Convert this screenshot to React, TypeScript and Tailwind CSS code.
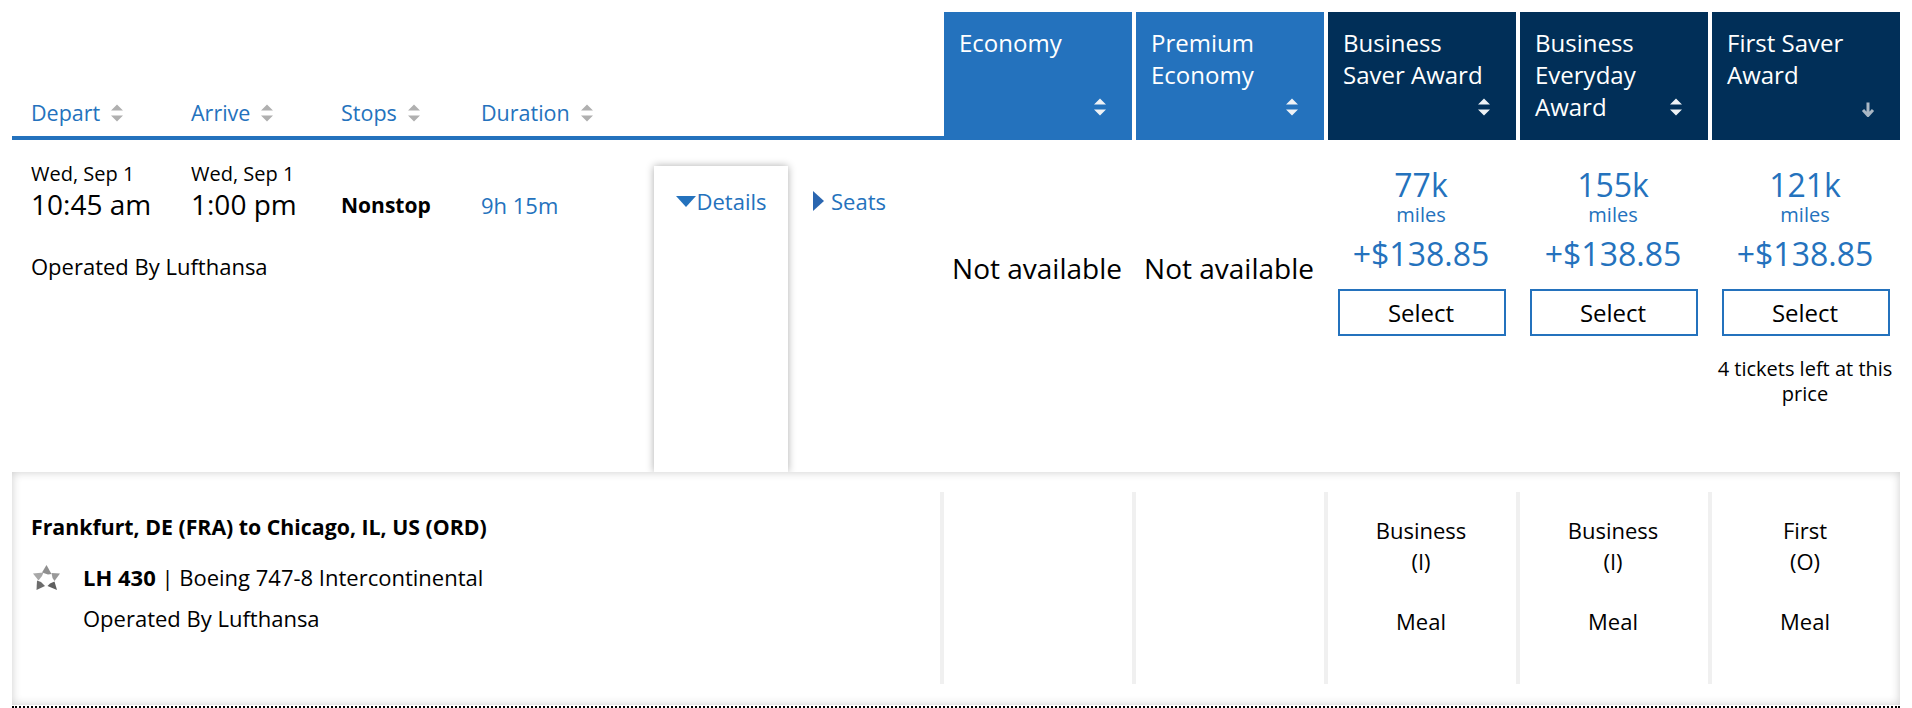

const font = { fontFamily: '"Open Sans", sans-serif' };

function Sort({ color = "#b0b0b0" }: { color?: string }) {
  return (
    <svg width="12" height="18" viewBox="0 0 12 18" className="shrink-0">
      <path d="M6 0.5 L12 6.5 H0 Z M0 11.5 H12 L6 17.5 Z" fill={color} />
    </svg>
  );
}

function HeadSort({ label }: { label: string }) {
  return (
    <div className="flex items-center gap-[11px] text-[21.5px] leading-[28px] text-[#2472bd]">
      <span>{label}</span>
      <Sort />
    </div>
  );
}

function FareHead({ label, navy, arrow }: { label: string; navy?: boolean; arrow?: boolean }) {
  return (
    <div className={`relative w-[188px] h-[128px] pl-[15px] pt-[15px] pr-2 text-[24px] leading-[32px] text-white ${navy ? "bg-[#012f58]" : "bg-[#2472bd]"}`}>
      <div className="whitespace-pre-line">{label}</div>
      <div className={`absolute ${arrow ? "right-[25px] top-[90px]" : "right-[26px] top-[86px]"}`}>
        {arrow ? (
          <svg width="14" height="15" viewBox="0 0 14 15">
            <path d="M7 0.5 V13 M2 8 L7 13.5 L12 8" fill="none" stroke="#aab7c4" strokeWidth="3" />
          </svg>
        ) : (
          <Sort color="#eef2f6" />
        )}
      </div>
    </div>
  );
}

function Price({ miles, note }: { miles: string; note?: boolean }) {
  return (
    <div className="w-[188px] flex flex-col items-center pt-[25px] text-[#2472bd]">
      <div className="pr-[2px] text-[32px] leading-[39px]">{miles}</div>
      <div className="pr-[2px] text-[20px] leading-[22px]">miles</div>
      <div className="pr-[2px] text-[32px] leading-[40px] mt-[8px]">+$138.85</div>
      <div className="mt-[15px] pr-[2px] w-[168px] h-[47px] border-2 border-[#2472bd] flex items-center justify-center text-[24px] text-black">Select</div>
      {note && <div className="mt-[20px] pr-[2px] w-[188px] text-center text-[20px] leading-[25px] text-black">4 tickets left at this price</div>}
    </div>
  );
}

function NA() {
  return (
    <div className="w-[188px] pt-[111px] pr-[2px] text-center text-[28px] leading-[34px] text-black whitespace-nowrap">Not available</div>
  );
}

function Cabin({ a, b }: { a?: string; b?: string }) {
  return (
    <div className="w-[192px] h-[192px] border-l-4 border-[#f0f0f0] pr-[2px] flex flex-col items-center pt-[23px] text-[22px] leading-[31px] text-black">
      {a && (
        <>
          <div>{a}</div>
          <div>{b}</div>
          <div className="mt-[29px]">Meal</div>
        </>
      )}
    </div>
  );
}

function Star() {
  return (
    <svg width="27" height="25" viewBox="0 0 27 25" className="shrink-0 blur-[0.6px]">
      <path d="M13.5 0 L18.5 9 L15 9.5 L9 7.5 Z" fill="#8f8f8f" />
      <path d="M27 8.5 L21.5 16 L19.5 13 L18.5 8 Z" fill="#999999" />
      <path d="M24 25 L14.5 21 L17 18.5 L21.5 16.5 Z" fill="#5f5f5f" />
      <path d="M3.5 25 L4 15.5 L8 17 L12 21 Z" fill="#6c6c6c" />
      <path d="M0 8.5 L10.5 7.5 L9 11 L5.5 15.5 Z" fill="#a8a8a8" />
    </svg>
  );
}

export default function App() {
  return (
    <div style={font} className="w-[1912px] h-[708px] overflow-hidden bg-white text-black">
      <div className="flex pt-[12px] pl-[12px] pr-[12px]">
        <div className="w-[932px] border-b-[4px] border-[#2472bd] flex items-end pl-[19px] pb-[9px]">
          <div className="w-[160px]"><HeadSort label="Depart" /></div>
          <div className="w-[150px]"><HeadSort label="Arrive" /></div>
          <div className="w-[140px]"><HeadSort label="Stops" /></div>
          <div><HeadSort label="Duration" /></div>
        </div>
        <div className="flex gap-[4px]">
          <FareHead label="Economy" />
          <FareHead label={"Premium\nEconomy"} />
          <FareHead label={"Business\nSaver Award"} navy />
          <FareHead label={"Business\nEveryday\nAward"} navy />
          <FareHead label={"First Saver\nAward"} navy arrow />
        </div>
      </div>

      <div className="flex h-[332px] pl-[31px]">
        <div className="w-[913px] flex">
          <div className="w-[623px] pt-[21px]">
            <div className="flex">
              <div className="w-[160px]">
                <div className="text-[20px] leading-[25px]">Wed, Sep 1</div>
                <div className="text-[28px] leading-[36px]">10:45 am</div>
              </div>
              <div className="w-[150px]">
                <div className="text-[20px] leading-[25px]">Wed, Sep 1</div>
                <div className="text-[28px] leading-[36px]">1:00 pm</div>
              </div>
              <div className="w-[140px] pt-[26px] text-[21px] leading-[36px] font-bold">Nonstop</div>
              <div className="pt-[26px] text-[22px] leading-[36px] text-[#2472bd]">9h 15m</div>
            </div>
            <div className="mt-[30px] text-[22px] leading-[26px]">Operated By Lufthansa</div>
          </div>
          <div className="mt-[26px] w-[134px] h-[306px] bg-white shadow-[0_0_8px_rgba(0,0,0,0.32)] flex justify-center pt-[21px]">
            <div className="flex items-center h-[28px] gap-[1px] text-[22px] text-[#2472bd]">
              <svg width="20" height="11" viewBox="0 0 20 11"><path d="M0 0 H20 L10 11 Z" fill="#2472bd" /></svg>
              <span>Details</span>
            </div>
          </div>
          <div className="mt-[47px] ml-[25px] flex items-center h-[28px] gap-[7px] text-[22px] text-[#2472bd]">
            <svg width="11" height="20" viewBox="0 0 11 20"><path d="M0 0 V20 L11 10 Z" fill="#2a66b0" /></svg>
            <span>Seats</span>
          </div>
        </div>
        <NA />
        <div className="w-[4px]" />
        <NA />
        <div className="w-[4px]" />
        <Price miles="77k" />
        <div className="w-[4px]" />
        <Price miles="155k" />
        <div className="w-[4px]" />
        <Price miles="121k" note />
      </div>

      <div className="relative mx-[12px] h-[233px] flex bg-white shadow-[inset_0_0_10px_rgba(0,0,0,0.2)] pt-[20px]">
        <div className="w-[928px] pl-[19px]">
          <div className="text-[21.3px] leading-[28px] font-bold mt-[21px]">Frankfurt, DE (FRA) to Chicago, IL, US (ORD)</div>
          <div className="flex items-center mt-[19px] h-[34px]">
            <div className="w-[52px] pl-[2px] flex"><Star /></div>
            <div className="text-[22px] leading-[30px]"><span className="font-bold">LH 430</span> | Boeing 747-8 Intercontinental</div>
          </div>
          <div className="ml-[52px] mt-[9px] text-[22px] leading-[30px]">Operated By Lufthansa</div>
        </div>
        <Cabin />
        <Cabin />
        <Cabin a="Business" b="(I)" />
        <Cabin a="Business" b="(I)" />
        <Cabin a="First" b="(O)" />
      </div>
      <div className="mx-[12px] mt-[1px] border-t-2 border-dotted border-black" />
    </div>
  );
}
